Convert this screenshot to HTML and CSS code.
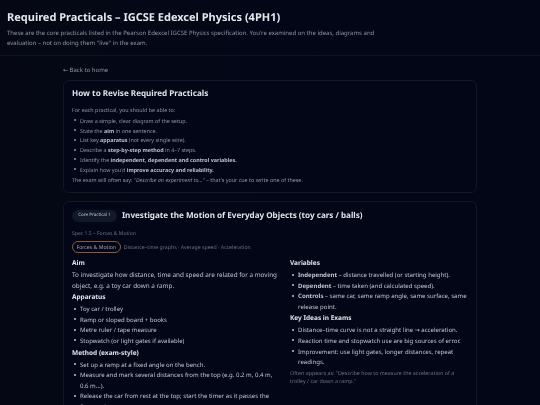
FILE: index.html
```html
<!DOCTYPE html>
<html>
<head>
  <title>Required Practicals</title>
  <link rel="stylesheet" href="styles.css">
</head>
<body>
  <header class="site-header">
    <h1>Required Practicals – IGCSE Edexcel Physics (4PH1)</h1>
    <p>These are the core practicals listed in the Pearson Edexcel IGCSE Physics specification. You're examined on the ideas, diagrams and evaluation – not on doing them "live" in the exam.</p>
  </header>

  <main class="container">
    <a class="back-link" href="#">← Back to home</a>

    <section class="card intro">
      <h2>How to Revise Required Practicals</h2>
      <p>For each practical, you should be able to:</p>
      <ul>
        <li>Draw a simple, clear diagram of the setup.</li>
        <li>State the <strong>aim</strong> in one sentence.</li>
        <li>List key <strong>apparatus</strong> (not every single wire).</li>
        <li>Describe a <strong>step-by-step method</strong> in 4–7 steps.</li>
        <li>Identify the <strong>independent, dependent and control variables.</strong></li>
        <li>Explain how you'd <strong>improve accuracy and reliability.</strong></li>
      </ul>
      <p>The exam will often say: <em>"Describe an experiment to..."</em> – that's your cue to write one of these.</p>
    </section>

    <section class="card practical">
      <div class="practical-head">
        <span class="badge">Core Practical 1</span>
        <h2>Investigate the Motion of Everyday Objects (toy cars / balls)</h2>
      </div>
      <p class="spec">Spec 1.5 – Forces &amp; Motion</p>
      <div class="tags">
        <span class="tag">Forces &amp; Motion</span>
        <span class="topics">Distance–time graphs · Average speed · Acceleration</span>
      </div>
      <div class="columns">
        <div>
          <h3>Aim</h3>
          <p class="aim">To investigate how distance, time and speed are related for a moving object, e.g. a toy car down a ramp.</p>
          <h3>Apparatus</h3>
          <ul>
            <li>Toy car / trolley</li>
            <li>Ramp or sloped board + books</li>
            <li>Metre ruler / tape measure</li>
            <li>Stopwatch (or light gates if available)</li>
          </ul>
          <h3>Method (exam-style)</h3>
          <ul>
            <li>Set up a ramp at a fixed angle on the bench.</li>
            <li>Measure and mark several distances from the top (e.g. 0.2 m, 0.4 m, 0.6 m...).</li>
            <li>Release the car from rest at the top; start the timer as it passes the first mark.</li>
          </ul>
        </div>
        <div>
          <h3>Variables</h3>
          <ul>
            <li><strong>Independent</strong> – distance travelled (or starting height).</li>
            <li><strong>Dependent</strong> – time taken (and calculated speed).</li>
            <li><strong>Controls</strong> – same car, same ramp angle, same surface, same release point.</li>
          </ul>
          <h3>Key Ideas in Exams</h3>
          <ul>
            <li>Distance–time curve is not a straight line → acceleration.</li>
            <li>Reaction time and stopwatch use are big sources of error.</li>
            <li>Improvement: use light gates, longer distances, repeat readings.</li>
          </ul>
          <p class="note">Often appears as: "Describe how to measure the acceleration of a trolley / car down a ramp."</p>
        </div>
      </div>
    </section>
  </main>
</body>
</html>
```

FILE: styles.css
```css
* {
  box-sizing: border-box;
}

html, body {
  height: 405px;
  overflow: hidden;
}

body {
  margin: 0;
  font-family: "Noto Sans", "DejaVu Sans", sans-serif;
  text-rendering: geometricPrecision;
  background: linear-gradient(90deg, #050814 0%, #020617 60%);
  color: #e5e7eb;
}

/* Page header */
.site-header {
  height: 56px;
  padding: 10px 7px 0;
  border-bottom: 1px solid #0f1422;
  will-change: opacity;
}

.site-header h1 {
  margin: 0 0 3px;
  font-size: 11px;
  line-height: 15px;
  font-weight: 700;
  color: #e5e7eb;
}

.site-header p {
  margin: 0;
  max-width: 375px;
  font-size: 6px;
  line-height: 10px;
  color: #8f96a3;
}

/* Main column */
.container {
  width: 414px;
  margin: 0 auto;
  padding-top: 10px;
  will-change: opacity;
}

.back-link {
  display: block;
  height: 14px;
  font-size: 6px;
  line-height: 9px;
  color: #8f96a3;
  text-decoration: none;
}

.card {
  border: 1px solid #111827;
  border-radius: 6px;
  padding: 7px 8px;
  margin-bottom: 8px;
  background: #020617;
}

.card h2 {
  margin: 0;
  font-size: 8.1px;
  line-height: 12px;
  font-weight: 700;
  color: #dfe3ea;
}

.card p,
.card ul {
  margin: 0;
}

/* Bullets sit closer to the text than the default marker */
.card ul {
  padding-left: 8px;
  list-style: none;
}

.card li::before {
  content: "";
  display: inline-block;
  width: 2px;
  height: 2px;
  margin-left: -6px;
  margin-right: 4px;
  border-radius: 50%;
  background: currentColor;
  vertical-align: 1.5px;
}

.intro {
  height: 113px;
  font-size: 5.4px;
  line-height: 9.8px;
  color: #8f96a3;
}

.intro h2 {
  margin-bottom: 6px;
}

.card.intro ul {
  margin-top: 1px;
}

.intro strong {
  color: #b9c0cc;
}

/* Practical card */
.practical {
  height: 260px;
  font-size: 6.05px;
}

.practical-head {
  display: flex;
  align-items: center;
  gap: 5px;
  height: 14px;
}

.badge {
  padding: 2px 6.2px;
  border-radius: 6px;
  background: #111827;
  font-size: 4.5px;
  line-height: 7.5px;
  color: #b9c0cc;
}

.card .spec {
  margin-top: 7px;
  font-size: 5.1px;
  line-height: 8px;
  color: #6b7280;
}

.tags {
  display: flex;
  align-items: center;
  gap: 3px;
  margin-top: 3px;
  font-size: 5.2px;
  color: #6b7280;
}

.tag {
  padding: 1px 3.5px;
  border: 1px solid #8a5a3c;
  border-radius: 6px;
  line-height: 8px;
  color: #9ca3af;
}

.columns {
  display: grid;
  grid-template-columns: 208fr 178fr;
  gap: 10px;
  margin-top: 4px;
  line-height: 10.6px;
  color: #c0c6d0;
}

.columns h3 {
  margin: 1px 0 2px;
  font-size: 6.5px;
  line-height: 10px;
  font-weight: 700;
  color: #dfe3ea;
}

.aim {
  font-size: 6.35px;
}

.card .columns ul {
  margin-top: 0.5px;
}

.card .note {
  margin-top: 1px;
  font-size: 5.35px;
  line-height: 8.5px;
  color: #6b7280;
}
```
